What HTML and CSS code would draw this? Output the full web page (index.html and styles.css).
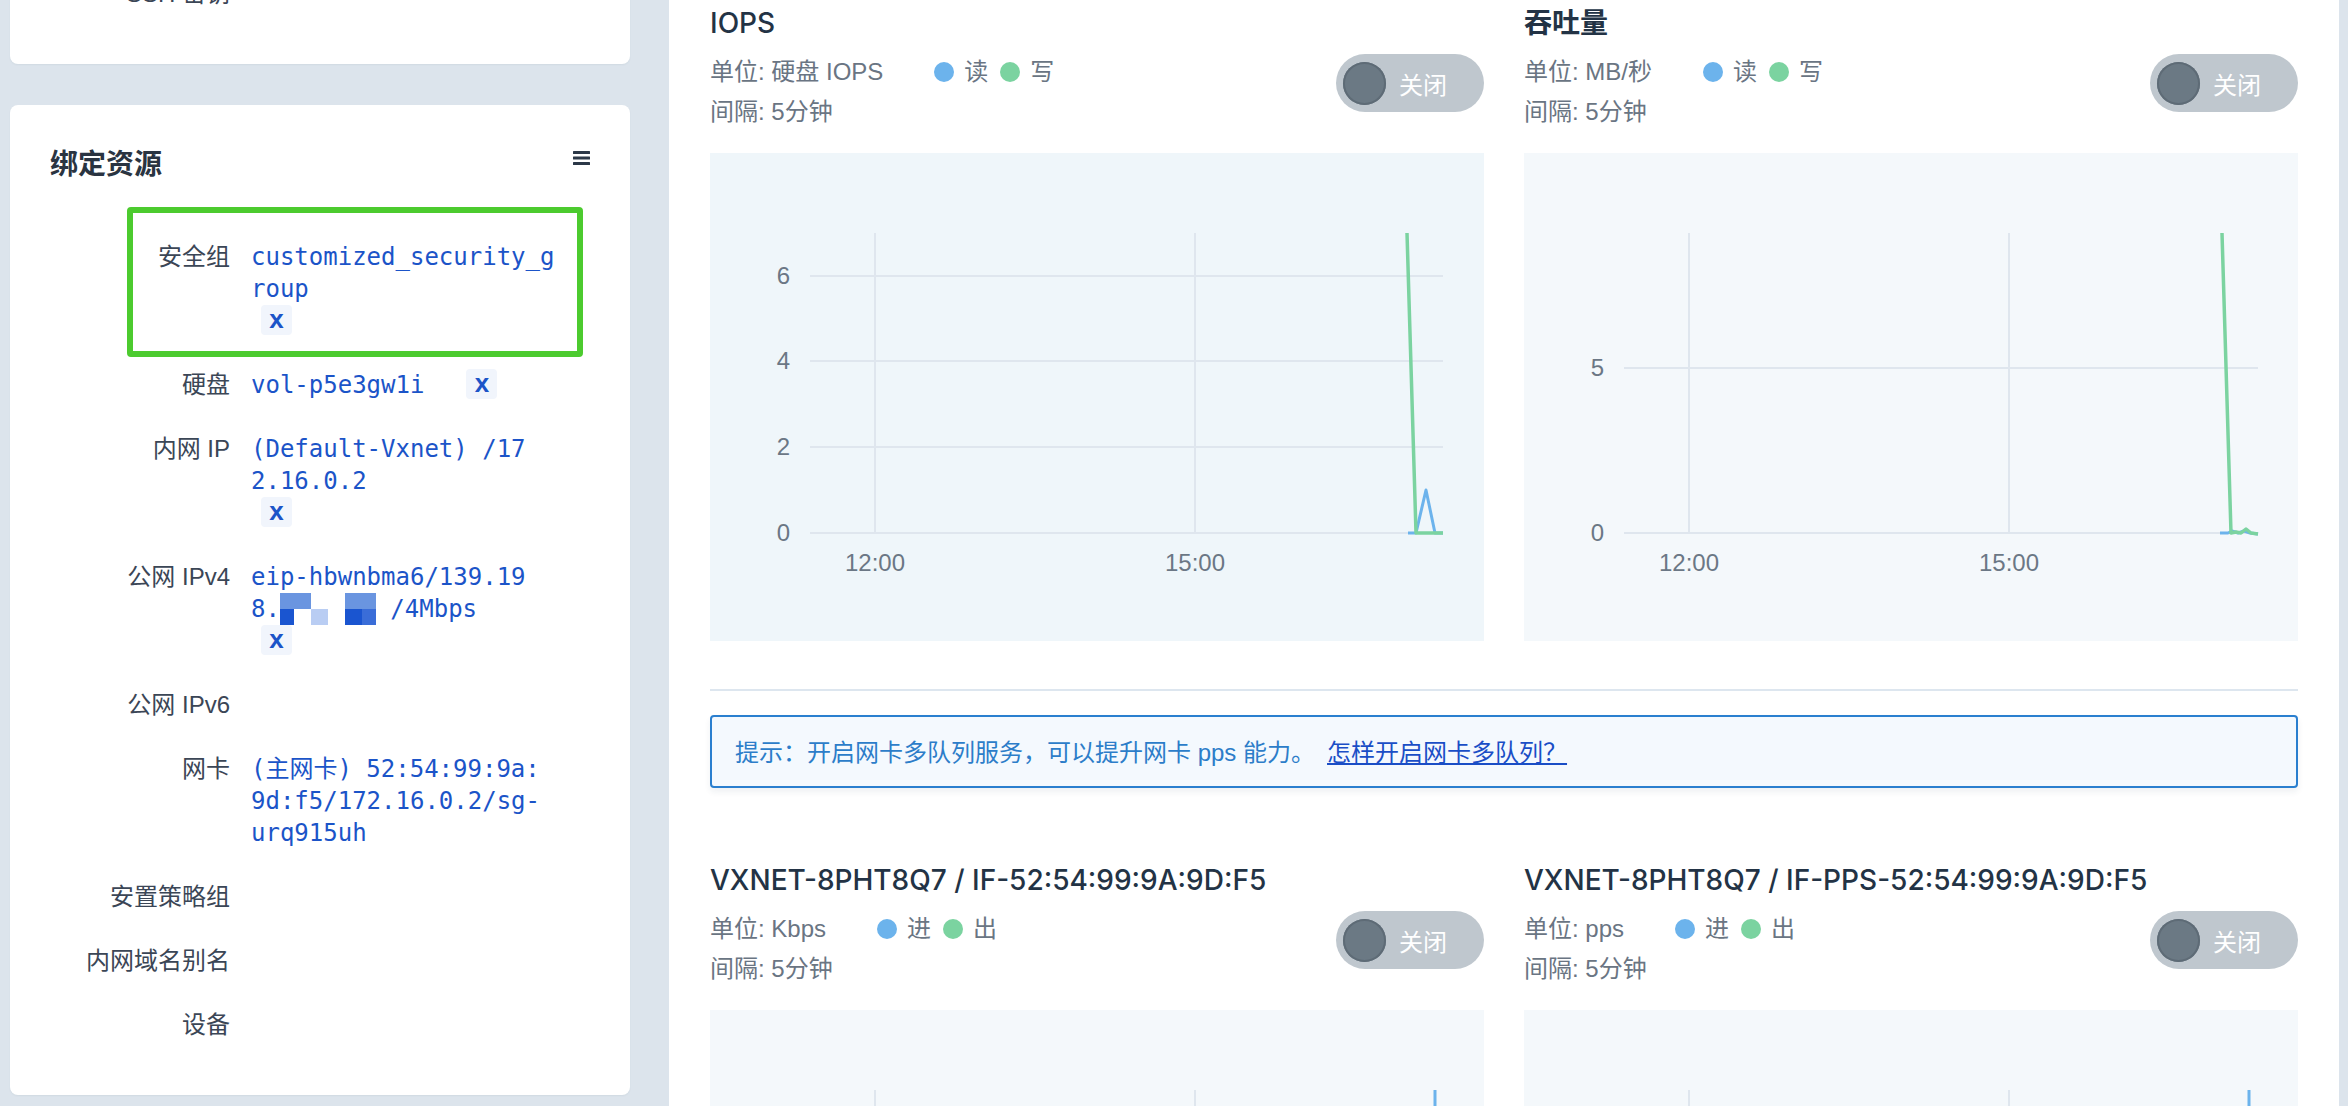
FILE: index.html
```html
<!DOCTYPE html>
<html lang="zh-CN">
<head>
<meta charset="utf-8">
<title>资源监控</title>
<link rel="stylesheet" href="styles.css">
</head>
<body>
<div class="page">
  <aside class="side">
    <section class="card card-top">
      <div class="rows rows-top">
        <div class="row"><div class="label">SSH 密钥</div><div class="value"></div></div>
      </div>
    </section>

    <section class="card">
      <header class="card-head">
        <h2 class="card-title">绑定资源</h2>
        <svg class="menu-icon" width="17" height="14" viewBox="0 0 17 14"><rect x="0" y="0" width="17" height="3" rx="0.5"/><rect x="0" y="5.5" width="17" height="3" rx="0.5"/><rect x="0" y="11" width="17" height="3" rx="0.5"/></svg>
      </header>
      <div class="rows">
        <div class="row">
          <span class="hl-box"></span>
          <div class="label">安全组</div>
          <div class="value">customized_security_g<br>roup<br><span class="rm">x</span></div>
        </div>
        <div class="row">
          <div class="label">硬盘</div>
          <div class="value">vol-p5e3gw1i<span class="rm rm-gap">x</span></div>
        </div>
        <div class="row">
          <div class="label">内网 IP</div>
          <div class="value">(Default-Vxnet) /17<br>2.16.0.2<br><span class="rm">x</span></div>
        </div>
        <div class="row">
          <div class="label">公网 IPv4</div>
          <div class="value">eip-hbwnbma6/139.19<br>8.<span class="mosaic"><i class="c-a"></i><i class="c-a"></i><i class="c-w"></i><i class="c-w"></i><i class="c-a"></i><i class="c-a"></i><i class="c-d"></i><i class="c-w"></i><i class="c-p"></i><i class="c-w"></i><i class="c-d"></i><i class="c-e"></i></span> /4Mbps<br><span class="rm">x</span></div>
        </div>
        <div class="row">
          <div class="label">公网 IPv6</div>
          <div class="value"></div>
        </div>
        <div class="row">
          <div class="label">网卡</div>
          <div class="value">(主网卡) 52:54:99:9a:<br>9d:f5/172.16.0.2/sg-<br>urq915uh</div>
        </div>
        <div class="row">
          <div class="label">安置策略组</div>
          <div class="value"></div>
        </div>
        <div class="row">
          <div class="label">内网域名别名</div>
          <div class="value"></div>
        </div>
        <div class="row">
          <div class="label">设备</div>
          <div class="value"></div>
        </div>
      </div>
    </section>
  </aside>

  <main class="panel">
    <div class="chart-row">
      <div class="chart">
        <div class="chart-title">IOPS</div>
        <div class="chart-meta">
          <div class="meta-text">
            <div class="meta-line">单位: 硬盘 IOPS<span class="legend"><span class="dot dot-blue"></span><span class="legend-label">读</span><span class="dot dot-green"></span><span class="legend-label">写</span></span></div>
            <div class="meta-line">间隔: 5分钟</div>
          </div>
          <div class="toggle"><span class="knob"></span><span class="toggle-text">关闭</span></div>
        </div>
        <div class="plot plot-hover">
          <svg class="plot-svg" width="774" height="488" viewBox="0 0 774 488">
            <g class="grid">
              <line x1="100" y1="123" x2="733" y2="123"/>
              <line x1="100" y1="208" x2="733" y2="208"/>
              <line x1="100" y1="294" x2="733" y2="294"/>
              <line x1="100" y1="380" x2="733" y2="380"/>
              <line x1="165" y1="80" x2="165" y2="380"/>
              <line x1="485" y1="80" x2="485" y2="380"/>
            </g>
            <text class="tick tick-y" x="80" y="131">6</text>
            <text class="tick tick-y" x="80" y="216">4</text>
            <text class="tick tick-y" x="80" y="302">2</text>
            <text class="tick tick-y" x="80" y="388">0</text>
            <text class="tick tick-x" x="165" y="418">12:00</text>
            <text class="tick tick-x" x="485" y="418">15:00</text>
            <polyline class="series-blue" points="698,380 706,380 716,337 725,380 733,380"/>
            <polyline class="series-green" points="697,80 706,380 733,380"/>
          </svg>
        </div>
      </div>

      <div class="chart">
        <div class="chart-title chart-title-cjk">吞吐量</div>
        <div class="chart-meta">
          <div class="meta-text">
            <div class="meta-line">单位: MB/秒<span class="legend"><span class="dot dot-blue"></span><span class="legend-label">读</span><span class="dot dot-green"></span><span class="legend-label">写</span></span></div>
            <div class="meta-line">间隔: 5分钟</div>
          </div>
          <div class="toggle"><span class="knob"></span><span class="toggle-text">关闭</span></div>
        </div>
        <div class="plot">
          <svg class="plot-svg" width="774" height="488" viewBox="0 0 774 488">
            <g class="grid">
              <line x1="100" y1="215" x2="734" y2="215"/>
              <line x1="100" y1="380" x2="734" y2="380"/>
              <line x1="165" y1="80" x2="165" y2="380"/>
              <line x1="485" y1="80" x2="485" y2="380"/>
            </g>
            <text class="tick tick-y" x="80" y="223">5</text>
            <text class="tick tick-y" x="80" y="388">0</text>
            <text class="tick tick-x" x="165" y="418">12:00</text>
            <text class="tick tick-x" x="485" y="418">15:00</text>
            <polyline class="series-blue" points="696,380 704,380 708,378 714,380 720,378 726,380 734,381"/>
            <polyline class="series-green" points="698,80 707,380 712,379 717,380 722,376 727,380 734,381"/>
          </svg>
        </div>
      </div>
    </div>

    <div class="divider"></div>

    <div class="tip">提示：开启网卡多队列服务，可以提升网卡 pps 能力。<a class="tip-link" href="#">怎样开启网卡多队列？</a></div>

    <div class="chart-row chart-row-next">
      <div class="chart">
        <div class="chart-title">VXNET-8PHT8Q7 / IF-52:54:99:9A:9D:F5</div>
        <div class="chart-meta">
          <div class="meta-text">
            <div class="meta-line">单位: Kbps<span class="legend"><span class="dot dot-blue"></span><span class="legend-label">进</span><span class="dot dot-green"></span><span class="legend-label">出</span></span></div>
            <div class="meta-line">间隔: 5分钟</div>
          </div>
          <div class="toggle"><span class="knob"></span><span class="toggle-text">关闭</span></div>
        </div>
        <div class="plot">
          <svg class="plot-svg" width="774" height="488" viewBox="0 0 774 488">
            <g class="grid">
              <line x1="100" y1="380" x2="733" y2="380"/>
              <line x1="165" y1="80" x2="165" y2="380"/>
              <line x1="485" y1="80" x2="485" y2="380"/>
            </g>
            <polyline class="series-blue" points="725,80 725,380"/>
          </svg>
        </div>
      </div>

      <div class="chart">
        <div class="chart-title">VXNET-8PHT8Q7 / IF-PPS-52:54:99:9A:9D:F5</div>
        <div class="chart-meta">
          <div class="meta-text">
            <div class="meta-line">单位: pps<span class="legend"><span class="dot dot-blue"></span><span class="legend-label">进</span><span class="dot dot-green"></span><span class="legend-label">出</span></span></div>
            <div class="meta-line">间隔: 5分钟</div>
          </div>
          <div class="toggle"><span class="knob"></span><span class="toggle-text">关闭</span></div>
        </div>
        <div class="plot">
          <svg class="plot-svg" width="774" height="488" viewBox="0 0 774 488">
            <g class="grid">
              <line x1="100" y1="380" x2="734" y2="380"/>
              <line x1="165" y1="80" x2="165" y2="380"/>
              <line x1="485" y1="80" x2="485" y2="380"/>
            </g>
            <polyline class="series-blue" points="725,80 725,380"/>
          </svg>
        </div>
      </div>
    </div>
  </main>
</div>
</body>
</html>
```

FILE: styles.css
```css
* { box-sizing: border-box; margin: 0; padding: 0; }

html, body {
  width: 2348px;
  height: 1106px;
  overflow: hidden;
}

body {
  background: #dce4ec;
  font-family: "Liberation Sans", "Noto Sans CJK SC", sans-serif;
  font-size: 24px;
  color: #3a4554;
}

.page {
  display: flex;
  height: 1106px;
  padding-right: 9px;
}

/* ---------- left column ---------- */
.side {
  flex: none;
  width: 669px;
  padding-left: 10px;
  padding-right: 39px;
}

.card {
  position: relative;
  background: #ffffff;
  border-radius: 8px;
  padding: 40px 40px 54px;
  box-shadow: 0 1px 2px rgba(40, 60, 90, 0.06);
}

.card-top {
  margin-top: -62px;
  padding-bottom: 54px;
}

.card + .card { margin-top: 41px; }

.card-head {
  display: flex;
  justify-content: space-between;
  align-items: flex-start;
}

.card-title {
  font-size: 28px;
  line-height: 40px;
  font-weight: 700;
  color: #2a3441;
}

.menu-icon {
  margin-top: 6px;
  fill: #2c3848;
}

.rows {
  margin-top: 56px;
  display: flex;
  flex-direction: column;
  gap: 32px;
}

.rows-top { margin-top: 0; }

.row {
  position: relative;
  display: flex;
  gap: 21px;
  line-height: 32px;
}

.label {
  flex: none;
  width: 180px;
  text-align: right;
  color: #3b4656;
}

.value {
  font-family: "DejaVu Sans Mono", "Noto Sans CJK SC", monospace;
  font-size: 24px;
  color: #1b54c8;
  white-space: nowrap;
}

.rm {
  display: inline-block;
  vertical-align: top;
  width: 31px;
  height: 30px;
  line-height: 28px;
  margin-left: 10px;
  text-align: center;
  background: #f1f5fc;
  border-radius: 4px;
  font-family: "Liberation Sans", sans-serif;
  font-weight: 700;
  font-size: 26px;
  color: #1b54c8;
}

.rm-gap { margin-left: 42px; }

.mosaic {
  display: inline-grid;
  vertical-align: top;
  grid-template-columns: 14px 17px 17px 17px 17px 14px;
  grid-template-rows: 16px 16px;
  height: 32px;
}

.mosaic i { display: block; }
.c-a { background: #6a95e0; }
.c-d { background: #1a55d0; }
.c-p { background: #b9cdf3; }
.c-e { background: #3a6dd8; }
.c-w { background: #ffffff; }

.hl-box {
  position: absolute;
  left: 77px;
  top: -34px;
  width: 456px;
  height: 150px;
  border: 6px solid #4ccb2f;
  border-radius: 4px;
  pointer-events: none;
}

/* ---------- right panel ---------- */
.panel {
  flex: 1;
  background: #ffffff;
  padding: 3px 41px 0;
}

.chart-row {
  display: grid;
  grid-template-columns: 774px 774px;
  column-gap: 40px;
}

.chart-row-next { margin-top: 72px; }

.chart-title {
  font-family: "Inter", "Noto Sans CJK SC", sans-serif;
  font-size: 28px;
  line-height: 40px;
  font-weight: 500;
  color: #233345;
  white-space: nowrap;
}

.chart-title-cjk { font-weight: 700; }

.chart-meta {
  margin-top: 9px;
  display: flex;
  justify-content: space-between;
  align-items: flex-start;
}

.meta-line {
  display: flex;
  align-items: center;
  line-height: 40px;
  color: #6a7583;
}

.legend {
  display: flex;
  align-items: center;
  margin-left: 51px;
}

.dot {
  width: 20px;
  height: 20px;
  border-radius: 50%;
  margin-right: 10px;
}

.dot-blue { background: #6cb3ec; }
.dot-green { background: #7bd3a0; }

.legend-label + .dot { margin-left: 12px; }

.toggle {
  margin-top: 2px;
  width: 148px;
  height: 58px;
  border-radius: 29px;
  background: #bfc7ce;
  display: flex;
  align-items: center;
  padding-left: 7px;
}

.knob {
  width: 43px;
  height: 43px;
  border-radius: 50%;
  background: #6b7984;
  box-shadow: inset 0 0 0 2px #5e6b76;
}

.toggle-text {
  margin-left: 13px;
  color: #ffffff;
  font-size: 24px;
}

.plot {
  margin-top: 21px;
  height: 488px;
  background: #f4f8fb;
}

.plot-hover { background: #eff6fa; }

.plot-svg { display: block; }

.grid line {
  stroke: #dfe6ee;
  stroke-width: 2;
}

.tick {
  font-family: "Liberation Sans", sans-serif;
  font-size: 24px;
  fill: #6b7785;
}

.tick-y { text-anchor: end; }
.tick-x { text-anchor: middle; }

.series-blue {
  fill: none;
  stroke: #6cb3ec;
  stroke-width: 3;
  stroke-linejoin: round;
}

.series-green {
  fill: none;
  stroke: #7bd3a0;
  stroke-width: 3.5;
  stroke-linejoin: round;
}

.divider {
  margin-top: 48px;
  height: 2px;
  background: #dde6ef;
}

.tip {
  margin-top: 24px;
  border: 2px solid #2a7fcf;
  border-radius: 4px;
  background: #f4f9fe;
  padding: 20px 23px 17px;
  line-height: 32px;
  color: #2c7dc9;
  box-shadow: 0 4px 6px rgba(30, 50, 80, 0.07);
  white-space: nowrap;
}

.tip-link {
  margin-left: 12px;
  color: #1a4ec6;
  text-decoration: underline;
}
```
